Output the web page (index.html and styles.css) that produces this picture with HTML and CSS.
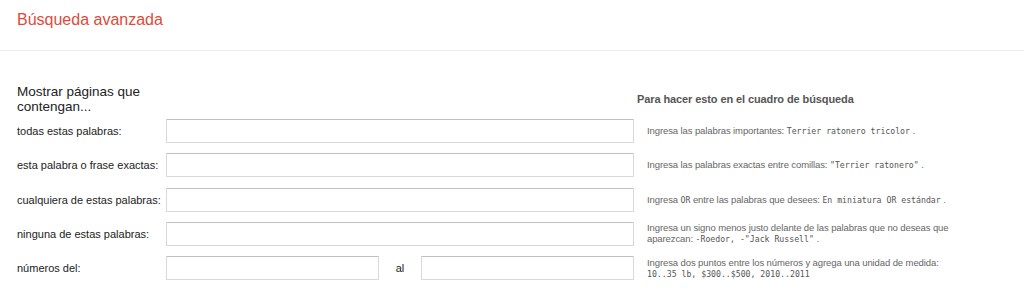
FILE: index.html
```html
<!DOCTYPE html>
<html lang="es">
<head>
<meta charset="utf-8">
<title>Búsqueda avanzada</title>
<link rel="stylesheet" href="styles.css">
</head>
<body>
<header class="topbar">
  <h1 class="title">Búsqueda avanzada</h1>
</header>
<main class="form">
  <div class="head-row">
    <h2 class="section-title">Mostrar páginas que contengan...</h2>
    <h3 class="help-title">Para hacer esto en el cuadro de búsqueda</h3>
  </div>
  <div class="row">
    <label class="label">todas estas palabras:</label>
    <div class="field"><input class="input" type="text"></div>
    <div class="help">Ingresa las palabras importantes: <span class="mono">Terrier ratonero tricolor</span> .</div>
  </div>
  <div class="row">
    <label class="label">esta palabra o frase exactas:</label>
    <div class="field"><input class="input" type="text"></div>
    <div class="help">Ingresa las palabras exactas entre comillas: <span class="mono">"Terrier ratonero"</span> .</div>
  </div>
  <div class="row">
    <label class="label">cualquiera de estas palabras:</label>
    <div class="field"><input class="input" type="text"></div>
    <div class="help">Ingresa <span class="mono">OR</span> entre las palabras que desees: <span class="mono">En miniatura OR estándar</span> .</div>
  </div>
  <div class="row">
    <label class="label">ninguna de estas palabras:</label>
    <div class="field"><input class="input" type="text"></div>
    <div class="help">Ingresa un signo menos justo delante de las palabras que no deseas que<br>aparezcan: <span class="mono">-Roedor, -"Jack Russell"</span> .</div>
  </div>
  <div class="row">
    <label class="label">números del:</label>
    <div class="field range">
      <input class="input" type="text">
      <span class="al">al</span>
      <input class="input" type="text">
    </div>
    <div class="help">Ingresa dos puntos entre los números y agrega una unidad de medida:<br><span class="mono">10..35 lb, $300..$500, 2010..2011</span></div>
  </div>
</main>
</body>
</html>
```
FILE: styles.css
```css
* { box-sizing: border-box; }
html, body { margin: 0; padding: 0; background: #fff; }
body {
  font-family: Arial, "Liberation Sans", sans-serif;
  color: #222;
}
.topbar {
  height: 51px;
  border-bottom: 1px solid #ebebeb;
  padding: 10px 0 0 17px;
}
.title {
  margin: 0;
  font-size: 16px;
  font-weight: normal;
  color: #dd4b39;
  line-height: 20px;
}
.form {
  padding: 33px 0 0 17px;
}
.head-row {
  display: flex;
  align-items: flex-end;
  height: 30px;
  margin-bottom: 5px;
}
.section-title {
  margin: 0;
  width: 149px;
  font-size: 13.5px;
  font-weight: normal;
  line-height: 15px;
  color: #222;
}
.help-title {
  margin: 0 0 8px 471px;
  font-size: 11px;
  font-weight: bold;
  color: #555;
  line-height: 13px;
  letter-spacing: -0.1px;
}
.row {
  display: grid;
  grid-template-columns: 149px 468px 320px;
  align-items: center;
  height: 24px;
  margin-bottom: 10.3px;
}
.label {
  font-size: 11px;
  color: #222;
  white-space: nowrap;
}
.field { display: flex; align-items: center; }
.input {
  width: 100%;
  height: 24px;
  border: 1px solid #d9d9d9;
  border-top-color: #c0c0c0;
  border-radius: 1px;
  margin: 0;
  padding: 0 8px;
  font: 13px Arial, "Liberation Sans", sans-serif;
  background: #fff;
}
.range .input { width: 213px; }
.range .al {
  width: 42px;
  text-align: center;
  font-size: 11px;
}
.help {
  padding-left: 13px;
  font-size: 9.5px;
  line-height: 11px;
  color: #666;
  letter-spacing: -0.1px;
  white-space: nowrap;
}
.mono {
  font-family: "DejaVu Sans Mono", "Liberation Mono", monospace;
  font-size: 8.2px;
  letter-spacing: 0;
  color: #555;
}
```
